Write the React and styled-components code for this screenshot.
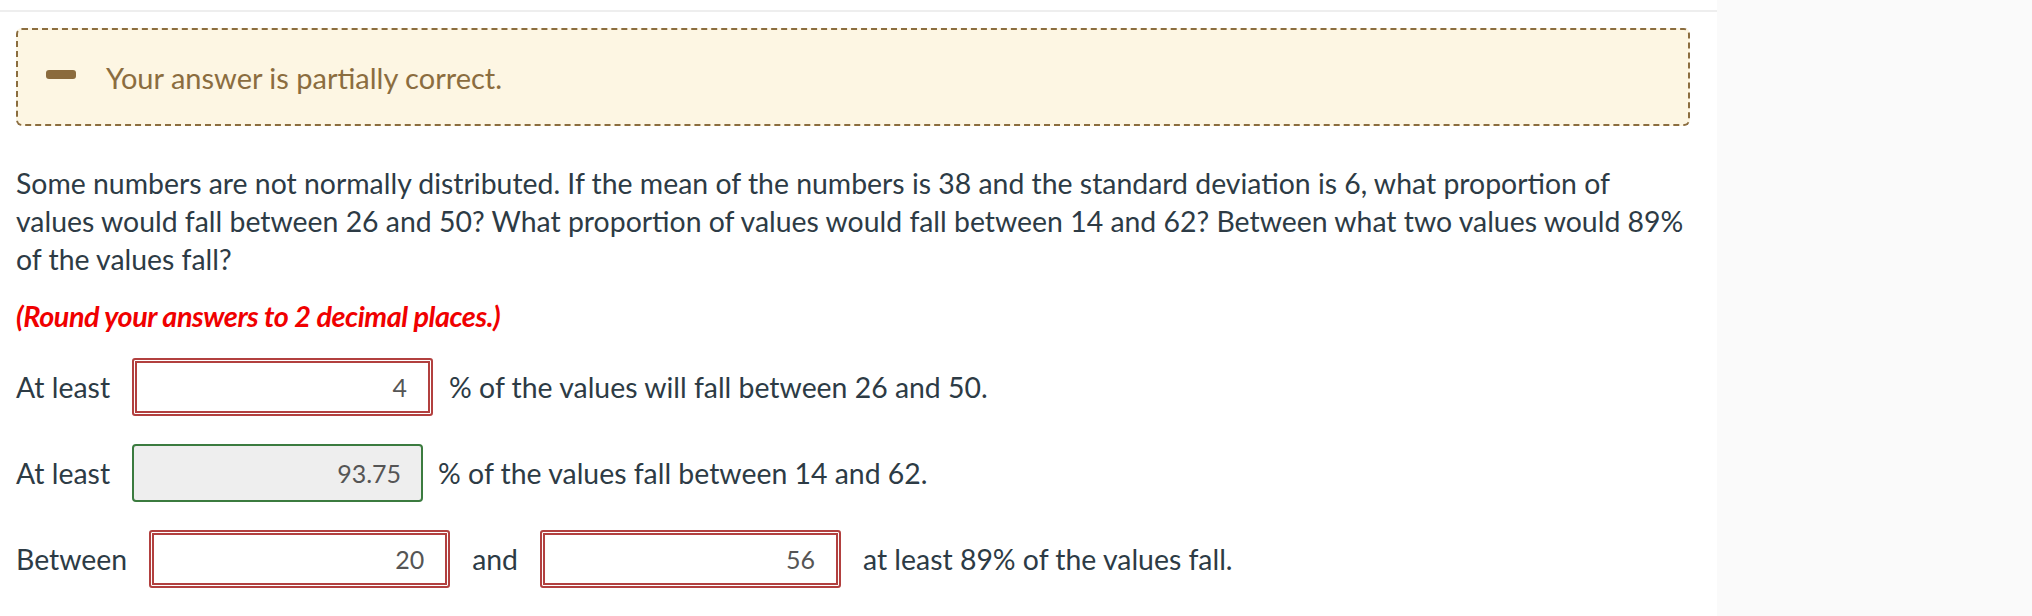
import React from 'react';
import styled, { createGlobalStyle } from 'styled-components';

const GlobalStyle = createGlobalStyle`
  html, body {
    margin: 0;
    padding: 0;
    background: #fff;
  }
  body {
    font-family: Lato, "Liberation Sans", sans-serif;
  }
`;

const Page = styled.div`
  display: flex;
  width: 2032px;
  height: 616px;
  overflow: hidden;
`;

const Main = styled.main`
  width: 1717px;
  padding-top: 10px;
  box-sizing: border-box;
`;

const Content = styled.div`
  border-top: 2px solid #eeeeee;
  padding: 16px 27px 0 16px;
`;

const Side = styled.aside`
  flex: 1;
  background: #fafafa;
`;

const Feedback = styled.div`
  display: flex;
  align-items: center;
  gap: 30px;
  height: 98px;
  box-sizing: border-box;
  padding: 0 28px;
  background: #fdf6e3;
  border: 2px dashed #8b6d3f;
  border-radius: 6px;
  color: #8b6d3f;
  font-size: 29px;
`;

const PartialIcon = styled.span`
  flex: none;
  width: 30px;
  height: 9px;
  margin-top: -6px;
  border-radius: 3px;
  background: #8b6b3d;
`;

const Question = styled.p`
  margin: 38px -40px 0 0;
  font-size: 28.4px;
  line-height: 38px;
  color: #2d3b45;
  white-space: nowrap;
`;

const Note = styled.p`
  margin: 19px 0 0;
  font-size: 28.8px;
  line-height: 38px;
  font-weight: 700;
  font-style: italic;
  letter-spacing: -0.45px;
  color: #f00000;
`;

const Row = styled.div`
  display: flex;
  align-items: center;
  gap: ${(p) => p.$gap}px;
  height: 58px;
  margin-top: ${(p) => p.$top}px;
  font-size: 28.4px;
  color: #2d3b45;
`;

const Label = styled.span`
  margin-right: ${(p) => p.$after || 0}px;
`;

const Answer = styled.input`
  box-sizing: border-box;
  width: ${(p) => (p.$state === 'correct' ? 291 : 301)}px;
  height: 58px;
  margin: 0;
  padding: 0 ${(p) => (p.$state === 'correct' ? 20 : 24)}px 0 10px;
  font-family: Lato, "Liberation Sans", sans-serif;
  font-size: 25px;
  color: #555;
  text-align: right;
  outline: none;
  border-radius: ${(p) => (p.$state === 'correct' ? 4 : 3)}px;
  border: 2px solid ${(p) => (p.$state === 'correct' ? '#3b7b3f' : '#b2403f')};
  background: ${(p) => (p.$state === 'correct' ? '#eeeeee' : '#fff')};
  box-shadow: ${(p) =>
    p.$state === 'correct'
      ? 'none'
      : 'inset 0 0 0 1px #fff, inset 0 0 0 3px #b2403f'};
`;

export default function App() {
  return (
    <>
      <GlobalStyle />
      <Page>
        <Main>
          <Content>
            <Feedback>
              <PartialIcon />
              <span>Your answer is partially correct.</span>
            </Feedback>

            <Question>
              Some numbers are not normally distributed. If the mean of the numbers is 38 and the standard deviation is 6, what proportion of
              <br />
              values would fall between 26 and 50? What proportion of values would fall between 14 and 62? Between what two values would 89%
              <br />
              of the values fall?
            </Question>

            <Note>(Round your answers to 2 decimal places.)</Note>

            <Row $gap={16} $top={23}>
              <Label $after={6}>At least</Label>
              <Answer $state="wrong" readOnly defaultValue="4" />
              <span>% of the values will fall between 26 and 50.</span>
            </Row>

            <Row $gap={15} $top={28}>
              <Label $after={7}>At least</Label>
              <Answer $state="correct" readOnly defaultValue="93.75" />
              <span>% of the values fall between 14 and 62.</span>
            </Row>

            <Row $gap={22} $top={28}>
              <Label>Between</Label>
              <Answer $state="wrong" readOnly defaultValue="20" />
              <span>and</span>
              <Answer $state="wrong" readOnly defaultValue="56" />
              <span>at least 89% of the values fall.</span>
            </Row>
          </Content>
        </Main>
        <Side />
      </Page>
    </>
  );
}
